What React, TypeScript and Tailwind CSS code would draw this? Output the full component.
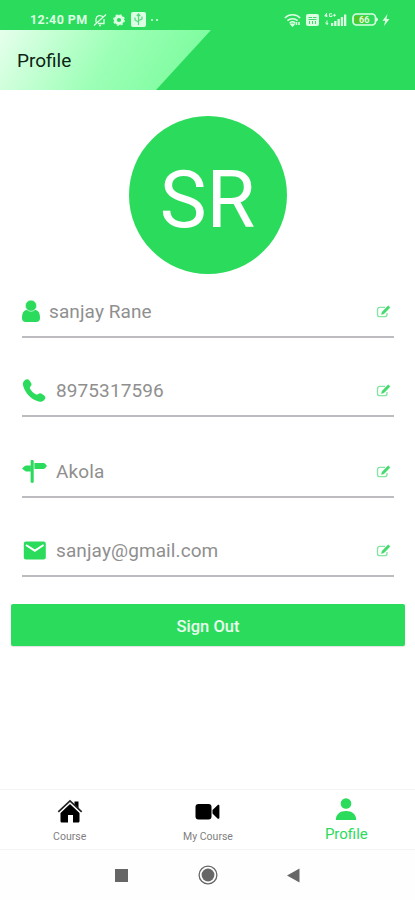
import type { ReactNode } from 'react'

type Field = {
  id: string
  value: string
  icon: ReactNode
  rowClass: string
}

const FIELDS: Field[] = [
  { id: 'name', value: 'sanjay Rane', icon: <PersonIcon />, rowClass: 'h-[53px] gap-2' },
  { id: 'phone', value: '8975317596', icon: <PhoneIcon />, rowClass: 'h-[79px] gap-[9px]' },
  { id: 'city', value: 'Akola', icon: <SignpostIcon />, rowClass: 'h-[81px] gap-[9px]' },
  { id: 'email', value: 'sanjay@gmail.com', icon: <MailIcon />, rowClass: 'h-[79px] gap-[9px]' },
]

export default function App() {
  return (
    <div className="flex h-[900px] w-[415px] flex-col overflow-hidden bg-white font-['Roboto',sans-serif]">
      <StatusBar />
      <Header />

      <main className="flex flex-1 flex-col">
        <div className="mx-auto mt-[26px] flex size-[158px] items-center justify-center rounded-full bg-[#2bdb5b]">
          <span className="pt-[10px] text-[79px] leading-none text-white">SR</span>
        </div>

        <div className="mt-[11px] mr-[21px] ml-[22px] flex flex-col">
          {FIELDS.map((field) => (
            <FieldRow key={field.id} field={field} />
          ))}
        </div>

        <button className="mt-[27px] mr-[10px] ml-[11px] h-[42px] rounded-[2px] bg-[#2bdb5b] pt-[4px] text-[16.5px] font-medium text-white/90 shadow-[0_1px_1px_rgba(0,0,0,0.12)]">
          Sign Out
        </button>
      </main>

      <TabBar />
      <SystemNav />
    </div>
  )
}

function StatusBar() {
  return (
    <div className="flex h-[30px] shrink-0 items-center justify-between bg-[#2bdb5b] pt-[9px] pr-[25px] pl-[30px] text-[#dcffe4]">
      <div className="flex items-center">
        <span className="w-[58px] pt-px text-[12.5px] leading-none font-bold tracking-[0.4px] whitespace-nowrap">12:40 PM</span>
        <MutedBellIcon />
        <GearIcon />
        <UsbIcon />
        <span className="ml-[5px] flex gap-[3px]">
          <span className="size-[2px] rounded-full bg-current" />
          <span className="size-[2px] rounded-full bg-current" />
        </span>
      </div>
      <div className="flex items-center">
        <WifiIcon />
        <VolteIcon />
        <SignalIcon />
        <BatteryIcon />
        <BoltIcon />
      </div>
    </div>
  )
}

function Header() {
  return (
    <header className="h-[60px] shrink-0 bg-[#2bdb5b]">
      <div className="flex h-full w-[211px] items-center bg-linear-[120deg,#e6ffec_0%,#9cffb6_50%,#74fb98_100%] pl-[17px] [clip-path:polygon(0_0,100%_0,156px_100%,0_100%)]">
        <h1 className="pt-[3px] text-[19px] text-[#0c2413]">Profile</h1>
      </div>
    </header>
  )
}

function FieldRow({ field }: { field: Field }) {
  return (
    <div className={`flex items-end border-b-2 border-[#bdbbc0] pb-[14px] ${field.rowClass}`}>
      {field.icon}
      <span className="flex-1 text-[19px] leading-[21px] tracking-[0.1px] text-[#8f8f8f]">{field.value}</span>
      <EditIcon />
    </div>
  )
}

function TabBar() {
  return (
    <nav className="grid h-[61px] shrink-0 grid-cols-3 border-y border-[#f5f5f5] text-[10.5px] text-[#808080]">
      <div className="flex flex-col items-center pt-[9px]">
        <HouseIcon />
        <span className="mt-[6px] ml-px leading-[14px]">Course</span>
      </div>
      <div className="flex flex-col items-center pt-[9px]">
        <CameraIcon />
        <span className="mt-[6px] ml-px leading-[14px]">My Course</span>
      </div>
      <div className="flex flex-col items-center pt-[8px] text-[#2bdb5b]">
        <UserIcon />
        <span className="mt-[5px] ml-px text-[15px] leading-[18px]">Profile</span>
      </div>
    </nav>
  )
}

function SystemNav() {
  return (
    <div className="flex h-[50px] shrink-0 items-center justify-center bg-[#fefefe] text-[#666]">
      <span className="size-[13px] bg-current" />
      <svg width="20" height="20" viewBox="0 0 20 20" fill="none" className="mr-[69px] ml-[70px]">
        <circle cx="10" cy="10" r="8.9" stroke="currentColor" strokeWidth="1.3" />
        <circle cx="10" cy="10" r="6.4" fill="currentColor" />
      </svg>
      <svg width="13" height="15" viewBox="0 0 13 15" fill="currentColor">
        <path d="M0 7.5 12.5.5v14z" />
      </svg>
    </div>
  )
}

/* Status bar icons */

function MutedBellIcon() {
  return (
    <svg width="14" height="14" viewBox="0 0 14 14" fill="none" stroke="currentColor" strokeWidth="1.3" className="ml-[5px]">
      <path d="M3 9.5V6a4 4 0 0 1 7-2M11 6v4.5H5M6 12.5h2M1 12.5 13 1.5" />
    </svg>
  )
}

function GearIcon() {
  return (
    <svg width="12" height="12" viewBox="0 0 12 12" fill="none" stroke="currentColor" className="ml-[6px]">
      <circle cx="6" cy="6" r="3.6" strokeWidth="3" />
      <circle cx="6" cy="6" r="5.3" strokeWidth="1.2" strokeDasharray="2.2 1.96" />
    </svg>
  )
}

function UsbIcon() {
  return (
    <svg width="15" height="15" viewBox="0 0 15 15" className="ml-[6px]">
      <rect width="15" height="15" rx="2" fill="currentColor" />
      <path d="M7.5 13V3M7.5 10 4 8V5.5M7.5 8.5 11 7V4.5M5.8 4 7.5 2l1.7 2" fill="none" stroke="#53dc79" strokeWidth="1.2" />
    </svg>
  )
}

function WifiIcon() {
  return (
    <svg width="18" height="14" viewBox="0 0 18 14" fill="none" stroke="currentColor" strokeWidth="1.5">
      <path d="M.8 5a11 11 0 0 1 15.4 0M3.4 7.6a7.6 7.6 0 0 1 10.2 0M5.8 10a4 4 0 0 1 5.4 0" />
      <path d="M7 11.2h3L8.5 13zM12.5 12V9M15 9v3" />
    </svg>
  )
}

function VolteIcon() {
  return (
    <svg width="13" height="12" viewBox="0 0 13 12" className="ml-[4px]">
      <rect width="13" height="12" rx="2" fill="currentColor" />
      <path d="M2.5 3.5H6M7 3.5h3.5M2.5 5.5h8M3.5 7v3M6.5 7v3M9.5 7v3" fill="none" stroke="#3fda69" strokeWidth="1" />
    </svg>
  )
}

function SignalIcon() {
  return (
    <svg width="23" height="13" viewBox="0 0 23 13" fill="currentColor" className="ml-[5px]">
      <path d="M7 10h2.3v3H7zM10.2 8h2.3v5h-2.3zM13.5 6h2.3v7h-2.3zM16.8 4h2.3v9h-2.3zM20 1.5h2.3V13H20z" />
      <path d="M2.5 0v4M.6 3h2.8L1 2.5 2.5.5M8 .8H5.5v2.7H8V2.2M9 2.2h3M10.5.8v2.8M3 7.5v4M1.5 9.5 3 11.5 4 10" fill="none" stroke="currentColor" strokeWidth="1" />
    </svg>
  )
}

function BatteryIcon() {
  return (
    <svg width="26" height="13" viewBox="0 0 26 13" className="ml-[5px]">
      <rect x="1" y="1" width="22.5" height="11" rx="3.5" fill="none" stroke="currentColor" strokeWidth="1.7" />
      <path d="M24 4.5c2.6.6 2.6 3.4 0 4z" fill="currentColor" />
      <rect x="2.8" y="2.8" width="12" height="7.4" rx="1.5" fill="#5bc41c" />
      <text x="7" y="9.8" fontSize="9" fontWeight="700" fill="currentColor">66</text>
    </svg>
  )
}

function BoltIcon() {
  return (
    <svg width="8" height="12" viewBox="0 0 8 12" fill="currentColor" className="ml-[4px]">
      <path d="M5.5 0 .5 6.8h2.7L2 12l5.5-7H4.5z" />
    </svg>
  )
}

/* Field icons */

function PersonIcon() {
  return (
    <svg width="19" height="22" viewBox="0.7 0 19 22" fill="#2bdb5b" className="shrink-0">
      <path d="M5.3 10C2.2 10.5.7 13 .7 18c0 2.8 1.3 4 3.8 4h10.3c2.5 0 3.9-1.2 3.9-4 0-5-1.5-7.5-4.6-8z" />
      <circle cx="9.7" cy="5.7" r="5.6" stroke="#e9fbee" strokeWidth=".7" />
    </svg>
  )
}

function PhoneIcon() {
  return (
    <svg width="25" height="23" viewBox="1 0 25 23" fill="#2bdb5b" className="-mb-px shrink-0">
      <path d="M3.5 1.4C5.3-.3 7.3-.2 8.5 1.5l1.6 2.6c.7 1.2.4 2.3-.5 3.2-.9.9-1 1.6-.4 2.6 1.3 2.2 3.2 4 5.5 5.3 1 .6 1.7.5 2.6-.3 1-.8 2.3-.9 3.4-.1l2.4 1.8c1.6 1.2 1.6 2.9.2 4.3-1.7 1.7-4.2 2.3-7 1.2C9.2 19.4 4.4 14 2.3 7.2 1.6 4.8 1.9 2.9 3.5 1.4z" />
    </svg>
  )
}

function SignpostIcon() {
  return (
    <svg width="25" height="23" viewBox="0.8 0 25.2 23.2" fill="#2bdb5b" className="-mb-px shrink-0">
      <path d="M9.5 1.2c0-.7.5-1.2 1.5-1.2s1.6.5 1.6 1.2V22c0 .7-.5 1.2-1.6 1.2S9.5 22.7 9.5 22z" />
      <path d="M13.3 3h9.2q.8 0 1.4.6L26 6l-2.1 2.4q-.6.6-1.4.6h-9.2zM9.7 5.5v6H5q-.8 0-1.4-.6L.8 8.5l2.8-2.4Q4.2 5.5 5 5.5z" />
    </svg>
  )
}

function MailIcon() {
  return (
    <svg width="25" height="20" viewBox="0.5 0.5 25 20" className="shrink-0">
      <rect x="2.3" y="1" width="22" height="18" rx="2.2" fill="#2bdb5b" />
      <path d="m4.5 4.5 8.8 5.7 8.8-5.7" fill="none" stroke="#fff" strokeWidth="2" />
    </svg>
  )
}

function EditIcon() {
  return (
    <svg width="15" height="14" viewBox="0 0 15 14" className="mr-[3px] mb-[3px] shrink-0">
      <path d="M9 2.3H3.8A2.3 2.3 0 0 0 1.5 4.6v4.8a2.3 2.3 0 0 0 2.3 2.3H8.7A2.3 2.3 0 0 0 11 9.4V8" fill="none" stroke="#83e5a0" strokeWidth="1.3" />
      <path d="M12.2.8 14 2.5 8 8.7l-2.5.8.7-2.6z" fill="#43da6d" stroke="#43da6d" strokeWidth=".5" />
    </svg>
  )
}

/* Tab icons */

function HouseIcon() {
  return (
    <svg width="26" height="25" viewBox="0 0 26 25" className="ml-px">
      <path d="M13 5 22.5 14v8c0 1-.6 1.6-1.6 1.6H16V16h-5v7.6H5.1c-1 0-1.6-.6-1.6-1.6v-8z" />
      <path d="M1.3 13.3 13 2.3l11.7 11" fill="none" stroke="#fff" strokeWidth="3" />
      <path d="M17.5 2.5h4v7.3l-4-3.8z" />
      <path d="M1.3 12.8 13 1.8l11.7 11" fill="none" stroke="#222" strokeWidth="1.7" />
    </svg>
  )
}

function CameraIcon() {
  return (
    <svg width="25" height="25" viewBox="0 0 25 25">
      <rect x=".5" y="5" width="16" height="15.5" rx="3" />
      <path d="M17.5 11 22.5 6.2c.7-.7 1.9-.4 1.9.6v12c0 1-1.2 1.2-1.9.6l-5-4.9z" />
    </svg>
  )
}

function UserIcon() {
  return (
    <svg width="22" height="22" viewBox="0 0 22 22" fill="#2bdb5b">
      <circle cx="11" cy="5.5" r="5.3" />
      <path d="M.8 22c0-5.6 4-9 10.2-9s10.2 3.4 10.2 9z" />
    </svg>
  )
}
